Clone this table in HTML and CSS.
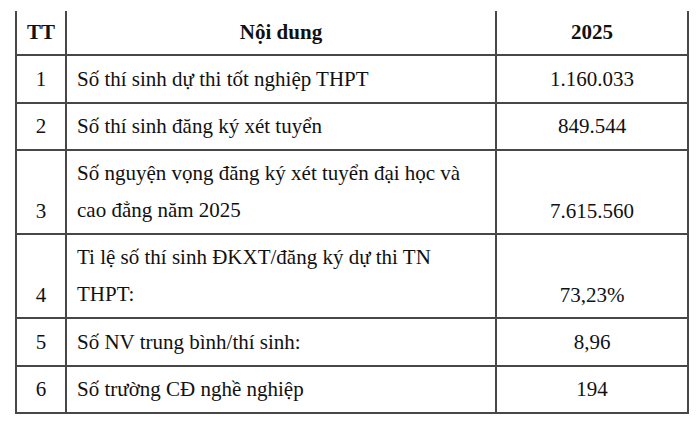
FILE: index.html
```html
<!DOCTYPE html>
<html lang="vi">
<head>
<meta charset="utf-8">
<link rel="stylesheet" href="styles.css">
</head>
<body>
<table class="stats">
  <colgroup>
    <col class="c-tt">
    <col class="c-content">
    <col class="c-year">
  </colgroup>
  <thead>
    <tr class="r-head">
      <th class="tt">TT</th>
      <th class="content-head">Nội dung</th>
      <th class="year">2025</th>
    </tr>
  </thead>
  <tbody>
    <tr class="r-single">
      <td class="tt">1</td>
      <td class="content">Số thí sinh dự thi tốt nghiệp THPT</td>
      <td class="year">1.160.033</td>
    </tr>
    <tr class="r-single2">
      <td class="tt">2</td>
      <td class="content">Số thí sinh đăng ký xét tuyển</td>
      <td class="year">849.544</td>
    </tr>
    <tr class="r-double">
      <td class="tt bottom">3</td>
      <td class="content">Số nguyện vọng đăng ký xét tuyển đại học và cao đẳng năm 2025</td>
      <td class="year bottom">7.615.560</td>
    </tr>
    <tr class="r-double">
      <td class="tt bottom">4</td>
      <td class="content">Ti lệ số thí sinh ĐKXT/đăng ký dự thi TN THPT:</td>
      <td class="year bottom">73,23%</td>
    </tr>
    <tr class="r-single">
      <td class="tt">5</td>
      <td class="content">Số NV trung bình/thí sinh:</td>
      <td class="year">8,96</td>
    </tr>
    <tr class="r-single2">
      <td class="tt">6</td>
      <td class="content">Số trường CĐ nghề nghiệp</td>
      <td class="year">194</td>
    </tr>
  </tbody>
</table>
</body>
</html>
```

FILE: styles.css
```css
html, body {
  margin: 0;
  padding: 0;
  background: #ffffff;
}

body {
  padding: 11px 0 0 15px;
  font-family: "Liberation Serif", "Tinos", "Times New Roman", "DejaVu Serif", serif;
  font-size: 21px;
  color: #111111;
}

.stats {
  border-collapse: collapse;
  table-layout: fixed;
  width: 672px;
  font-family: "Liberation Serif", "Tinos", "Times New Roman", "DejaVu Serif", serif;
}

.c-tt { width: 50px; }
.c-content { width: 430px; }
.c-year { width: 192px; }

.stats th,
.stats td {
  font-family: "Liberation Serif", "Tinos", "Times New Roman", "DejaVu Serif", serif;
  border: 2px solid #474747;
  padding: 0;
  line-height: 37px;
  vertical-align: middle;
}

.stats thead th {
  border-top: none;
  font-weight: bold;
  text-align: center;
}

.r-head { height: 44px; }
.r-single { height: 48px; }
.r-single2 { height: 47px; }
.r-double { height: 84px; }

.tt { text-align: center; }
.year { text-align: center; }

.content {
  text-align: left;
  padding: 0 10px !important;
}

.bottom {
  vertical-align: bottom !important;
  padding-bottom: 3px !important;
}
```
